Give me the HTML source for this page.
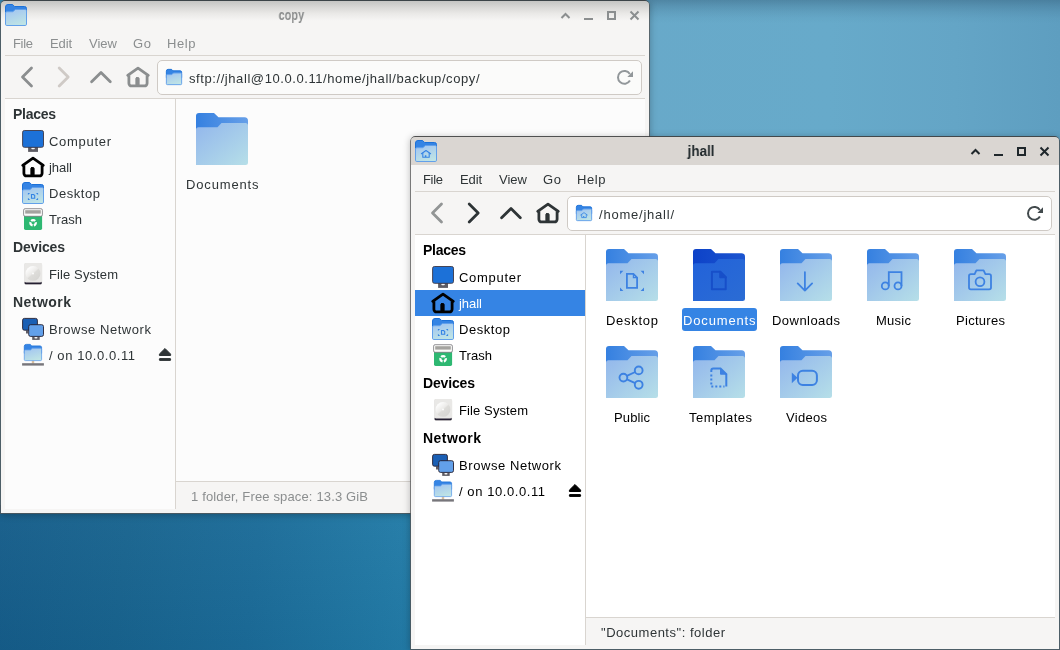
<!DOCTYPE html>
<html><head><meta charset="utf-8"><title>Thunar</title>
<style>
html,body{margin:0;padding:0;}
body{width:1060px;height:650px;overflow:hidden;position:relative;font-family:"Liberation Sans",sans-serif;background:#3a84ad;}
.dtr{position:absolute;left:640px;top:0;width:420px;height:140px;background:linear-gradient(180deg,rgba(45,85,112,0.42) 0px,rgba(45,85,112,0.26) 6px,rgba(45,85,112,0.13) 12px,rgba(45,85,112,0.04) 18px,rgba(45,85,112,0) 24px),linear-gradient(90deg,#68a9c9 0%,#67aaca 45%,#64a5c6 75%,#5e9ec0 100%);}
.dbl{position:absolute;left:0;top:505px;width:420px;height:145px;background:linear-gradient(180deg,rgba(255,255,255,0.03) 0%,rgba(0,20,50,0.05) 100%),linear-gradient(97deg,#155d8a 0%,#18648f 30%,#1b6c99 60%,#217aa6 90%,#247eaa 100%);}
.win{position:absolute;width:650px;height:514px;box-sizing:border-box;border-radius:5px 5px 0 0;box-shadow:0 1px 7px rgba(0,0,0,0.26);overflow:hidden;}
.win::after{content:"";position:absolute;left:0;top:0;right:0;bottom:0;border-radius:5px 5px 0 0;border:1px solid rgba(85,85,85,0.78);border-top-color:rgba(62,62,62,0.9);pointer-events:none;box-sizing:border-box;}
.wbg{position:absolute;left:1px;top:1px;right:1px;bottom:1px;background:#f6f5f4;border-radius:4px 4px 0 0;}
.titlebar{position:absolute;left:1px;top:1px;width:648px;height:29px;border-radius:4px 4px 0 0;background:linear-gradient(180deg,#c6c6c4 0%,#cbcbc9 7%,#dcdbd9 25%,#ebeae8 45%,#f6f5f4 68%);}
.win.active .titlebar{background:#dad6d2;height:28px;}
.t{position:absolute;white-space:nowrap;line-height:20px;height:20px;will-change:transform;}
.ic{position:absolute;overflow:visible;}
.hsep{position:absolute;left:5px;width:640px;height:1px;background:#d9d5d0;}
.vsep{position:absolute;left:175px;top:99px;width:1px;height:410px;background:#d9d5d0;}
.entry{position:absolute;left:157px;top:60px;width:485px;height:35px;box-sizing:border-box;border:1px solid #cfcac5;border-radius:5px;background:#fbfbfa;}
.win.active .entry{background:#ffffff;}
.side{position:absolute;left:5px;top:99px;width:170px;height:410px;background:#fcfcfc;}
.win.active .side{background:#ffffff;}
.main{position:absolute;left:176px;top:99px;width:469px;height:382px;background:#fcfcfc;}
.win.active .main{background:#ffffff;}
.selrow{position:absolute;left:5px;width:170px;height:26px;background:#3584e4;}
.sellab{position:absolute;background:#3584e4;border-radius:3px;}

</style></head><body>
<svg width="0" height="0" style="position:absolute">
<defs>
<linearGradient id="gb" x1="0" y1="0" x2="1" y2="0"><stop offset="0" stop-color="#3580e0"/><stop offset="1" stop-color="#669fe8"/></linearGradient>
<linearGradient id="gf" x1="0" y1="0" x2="1" y2="1"><stop offset="0" stop-color="#92b6ec"/><stop offset="1" stop-color="#b6dfe8"/></linearGradient>
<linearGradient id="gbs" x1="0" y1="0" x2="1" y2="0"><stop offset="0" stop-color="#0d42c8"/><stop offset="1" stop-color="#1c55d0"/></linearGradient>
<linearGradient id="gfs" x1="0" y1="0" x2="1" y2="1"><stop offset="0" stop-color="#2262da"/><stop offset="1" stop-color="#2b6cd4"/></linearGradient>
<linearGradient id="gfS" x1="0.2" y1="0" x2="0.6" y2="1"><stop offset="0" stop-color="#a2c5f1"/><stop offset="1" stop-color="#bfe4e5"/></linearGradient>
<linearGradient id="gdisk" x1="0.15" y1="0.1" x2="0.85" y2="0.9"><stop offset="0" stop-color="#ffffff"/><stop offset="0.45" stop-color="#ecebe9"/><stop offset="0.55" stop-color="#dddcd9"/><stop offset="1" stop-color="#d6d5d2"/></linearGradient>
<g id="folderS">
<path d="M0.5 3 A2.5 2.5 0 0 1 3 0.5 H7.6 L9.6 2.5 H19.5 A2 2 0 0 1 21.5 4.5 V12 H0.5 Z" fill="#3584e4" stroke="#1c71d8"/>
<path d="M0.5 9 A1.3 1.3 0 0 1 1.8 7.7 H8 L10.2 5.5 H20.2 A1.3 1.3 0 0 1 21.5 6.8 V20.2 A1.3 1.3 0 0 1 20.2 21.5 H1.8 A1.3 1.3 0 0 1 0.5 20.2 Z" fill="url(#gfS)" stroke="#62a0ea"/>
</g>
<g id="emS-home" fill="none" stroke="#3584e4" stroke-width="1.1" stroke-linejoin="round" stroke-linecap="round">
<path d="M6.4 13.7 L11 10.5 L15.6 13.7"/><path d="M7.8 13.3 V17.3 H14.2 V13.3"/><path d="M10.6 17 V15.2" stroke-width="1.5" stroke-linecap="butt"/>
</g>
<g id="emS-desktop" fill="none" stroke="#3584e4" stroke-width="1.1">
<path d="M9.5 12.5 H11.6 L12.7 13.6 V16.3 H9.5 Z"/>
<path d="M5.9 10.9 H8.1 L5.9 13.1 Z M16.1 10.9 H13.9 L16.1 13.1 Z M5.9 17.9 H8.1 L5.9 15.7 Z M16.1 17.9 H13.9 L16.1 15.7 Z" fill="#3584e4" stroke="none"/>
</g>
<g id="folder">
<path d="M3 0 H18 L22.5 4.2 H48.5 A3.5 3.5 0 0 1 52 7.7 V30 H0 V3 A3 3 0 0 1 3 0 Z" fill="url(#gb)"/>
<path d="M2.5 14.2 H21.5 L25.5 10 H49.5 A2.5 2.5 0 0 1 52 12.5 V49.5 A2.5 2.5 0 0 1 49.5 52 H0 V16.7 A2.5 2.5 0 0 1 2.5 14.2 Z" fill="url(#gf)"/>
</g>
<g id="folder-sel">
<path d="M3 0 H18 L22.5 4.2 H48.5 A3.5 3.5 0 0 1 52 7.7 V30 H0 V3 A3 3 0 0 1 3 0 Z" fill="url(#gbs)"/>
<path d="M2.5 14.2 H21.5 L25.5 10 H49.5 A2.5 2.5 0 0 1 52 12.5 V49.5 A2.5 2.5 0 0 1 49.5 52 H0 V16.7 A2.5 2.5 0 0 1 2.5 14.2 Z" fill="url(#gfs)"/>
</g>
<g id="em-home-big" fill="none" stroke="#2f7ae0" stroke-width="2.7" stroke-linejoin="round" stroke-linecap="round">
<path d="M18 32.5 L26.5 25.2 L35 32.5"/><path d="M20.3 31.5 V40.3 H32.7 V31.5"/><path d="M26.5 40 V36.5" stroke-width="3"/>
</g>
<g id="em-desktop" fill="none" stroke="#3d82e2" stroke-width="1.8">
<path d="M20.9 24.9 H27.4 L31.1 28.6 V38.9 H20.9 Z"/><path d="M27.4 24.9 V28.6 H31.1" stroke-width="1.2"/>
<path d="M14 21.8 H17.4 L14 25.2 Z M38 21.8 H34.6 L38 25.2 Z M14 42 H17.4 L14 38.6 Z M38 42 H34.6 L38 38.6 Z" fill="#3d82e2" stroke="none"/>
</g>
<g id="em-documents" fill="none" stroke="#174fc9" stroke-width="2" stroke-linejoin="round">
<path d="M18.9 22.8 H27.2 L32.7 28.3 V40.3 H18.9 Z"/><path d="M27.2 22.8 V28.3 H32.7 Z" fill="#174fc9"/>
</g>
<g id="em-downloads" fill="none" stroke="#3d82e2" stroke-width="1.8" stroke-linecap="round" stroke-linejoin="round">
<path d="M24.9 23.1 V41.6 M17.7 34.4 L24.9 41.6 L32.1 34.4"/>
</g>
<g id="em-music" fill="none" stroke="#3d82e2" stroke-width="1.8">
<circle cx="18.3" cy="36.9" r="3.5"/><circle cx="31" cy="36.9" r="3.5"/>
<path d="M21.8 36.9 V23.1 H34.5 V36.9"/>
</g>
<g id="em-pictures" fill="none" stroke="#3d82e2" stroke-width="1.8" stroke-linejoin="round">
<path d="M15 27 A1.9 1.9 0 0 1 16.9 25.1 H20.6 L22.4 21.3 H29.6 L31.4 25.1 H35.1 A1.9 1.9 0 0 1 37 27 V38.5 A1.9 1.9 0 0 1 35.1 40.4 H16.9 A1.9 1.9 0 0 1 15 38.5 Z"/>
<circle cx="26" cy="32.7" r="4.4"/>
</g>
<g id="em-public" fill="none" stroke="#3d82e2" stroke-width="1.9">
<circle cx="17.4" cy="31.6" r="3.9"/><circle cx="32.7" cy="24.4" r="3.9"/><circle cx="32.7" cy="38.8" r="3.9"/>
<path d="M20.9 29.9 L29.2 26 M20.9 33.3 L29.2 37.2"/>
</g>
<g id="em-templates" fill="none" stroke="#3d82e2" stroke-width="2">
<path d="M18.3 26 V24.4 A2 2 0 0 1 20.3 22.4 H27.5 L33.3 28.2 V40.4" />
<path d="M27.5 22.4 V28.2 H33.3 Z" fill="#3d82e2" stroke-width="1"/>
<path d="M18.3 28.4 V40.4 H31.5" stroke-dasharray="2 2"/>
</g>
<g id="em-videos" fill="none" stroke="#3d82e2" stroke-width="2">
<rect x="18" y="24.7" width="18.9" height="14.3" rx="4.8"/>
<path d="M11.8 26.4 L17.5 31.85 L11.8 37.3 Z" fill="#3d82e2" stroke="none"/>
</g>

<!-- sidebar icons 24x24 -->
<g id="si-computer">
<rect x="7.1" y="18" width="9.9" height="4.9" fill="#5e5c64"/><rect x="10.3" y="18.6" width="3.5" height="1.6" rx="0.8" fill="#f6f5f4"/>
<rect x="1.6" y="1.5" width="20.9" height="16.8" rx="1.8" fill="#1c71d8" stroke="#3d3846" stroke-width="0.9"/>
</g>
<g id="si-home" fill="none" stroke="currentColor" stroke-width="2.8" stroke-linejoin="round" stroke-linecap="round">
<path d="M1.7 10.3 L12 3.1 L22.3 10.3"/><path d="M2.9 10.2 V18.3 A2.6 2.6 0 0 0 5.5 20.9 H18.5 A2.6 2.6 0 0 0 21.1 18.3 V10.2" stroke-linecap="butt"/><rect x="9.9" y="12.6" width="3.2" height="8" rx="0.8" fill="currentColor" stroke-width="1"/>
</g>
<g id="si-desktop">
<g transform="translate(1,1)"><use href="#folderS"/><use href="#emS-desktop"/></g>
</g>
<g id="si-trash">
<path d="M3 9 H21.1 V21.3 A1.6 1.6 0 0 1 19.5 22.9 H4.6 A1.6 1.6 0 0 1 3 21.3 Z" fill="#2eb872"/>
<rect x="2.6" y="1.7" width="18.8" height="7.6" rx="1.5" fill="#fbfbfa" stroke="#77767b" stroke-width="0.8"/>
<rect x="4.2" y="3.2" width="15.6" height="3.4" fill="#a4a3a0"/>
<circle cx="12.1" cy="15.8" r="2.7" fill="none" stroke="#fff" stroke-width="2.2" stroke-dasharray="4.35 1.3" stroke-dashoffset="1"/>
</g>
<g id="si-disk">
<rect x="3.2" y="0.9" width="17.9" height="21.9" rx="2" fill="#dad9d6"/>
<rect x="3.6" y="19.6" width="17.1" height="2.7" rx="1" fill="#241f31"/>
<rect x="3.2" y="0.9" width="17.9" height="19.6" rx="1.9" fill="#e9e8e6"/>
<circle cx="12" cy="11.4" r="7.4" fill="url(#gdisk)"/>
<circle cx="12" cy="11.4" r="1" fill="#fbfbfb"/>
</g>
<g id="si-network">
<rect x="5" y="13.5" width="2.2" height="3" fill="#5e5c64"/>
<rect x="1.6" y="1.4" width="14.8" height="11.8" rx="1.8" fill="#1a5fb4" stroke="#241f31" stroke-width="0.9"/>
<rect x="11.2" y="19.6" width="7.5" height="3.3" fill="#5e5c64"/><rect x="13.4" y="20.1" width="3.1" height="1.4" rx="0.7" fill="#f6f5f4"/>
<rect x="7.7" y="7.7" width="14.8" height="11.7" rx="1.8" fill="#62a0ea" stroke="#241f31" stroke-width="0.9"/>
</g>
<g id="si-remote">
<rect x="10.8" y="17.5" width="2.4" height="3.2" fill="#dcc0a0"/>
<rect x="1.1" y="20.2" width="21.8" height="2.4" fill="#77767b"/>
<g transform="translate(2.9,1) scale(0.8227,0.7727)"><use href="#folderS"/></g>
</g>
</defs></svg>

<div class="dtr"></div><div class="dbl"></div>
<div class="win" style="left:0px;top:0px">
<div class="wbg"></div><div class="titlebar"></div>
<svg class="ic" style="left:5px;top:4px" width="22" height="22" viewBox="0 0 22 22"><use href="#folderS"/></svg>
<span class="t" style="left:274.86px;top:5.20px;font-size:14px;font-weight:bold;color:#8a8c8c;transform:scaleX(0.7804);transform-origin:50% 50%;">copy</span>
<svg class="ic" style="left:555px;top:5px" width="90" height="20" viewBox="0 0 90 20" fill="none" stroke="#8b8e8f" stroke-width="2"><path d="M6.5 13 L10.5 9 L14.5 13"/><path d="M29 14 H38"/><rect x="53" y="7" width="7" height="7"/><path d="M75.5 6.5 L83.5 14.5 M83.5 6.5 L75.5 14.5"/></svg>
<span class="t" style="left:13.00px;top:33.60px;font-size:13px;letter-spacing:-0.316px;color:#8b8e8f;">File</span>
<span class="t" style="left:50.00px;top:33.60px;font-size:13px;letter-spacing:-0.134px;color:#8b8e8f;">Edit</span>
<span class="t" style="left:89.00px;top:33.60px;font-size:13px;letter-spacing:0.019px;color:#8b8e8f;">View</span>
<span class="t" style="left:133.00px;top:33.60px;font-size:13px;letter-spacing:0.658px;color:#8b8e8f;">Go</span>
<span class="t" style="left:167.00px;top:33.60px;font-size:13px;letter-spacing:0.588px;color:#8b8e8f;">Help</span>
<div class="hsep" style="top:55px"></div>
<div class="hsep" style="top:98px"></div>
<svg class="ic" style="left:14px;top:62px" width="140" height="32" viewBox="0 0 140 32" fill="none" stroke-width="2.8" stroke-linecap="round" stroke-linejoin="round"><path d="M17.5 6 L8.5 15 L17.5 24" stroke="#8b8e8f"/><path d="M45.2 6 L54.2 15 L45.2 24" stroke="#cfcac6"/><path d="M77.6 19.8 L87 10.5 L96.3 19.8" stroke="#8b8e8f"/></svg>
<svg class="ic" style="left:126px;top:65px;color:#8b8e8f" width="24" height="24" viewBox="0 0 24 24"><use href="#si-home"/></svg>
<div class="entry"></div>
<svg class="ic" style="left:166px;top:69px" width="16" height="16" viewBox="0 0 22 22" stroke-width="1.3"><use href="#folderS"/></svg>
<span class="t" style="left:188.50px;top:68.60px;font-size:13px;letter-spacing:0.579px;color:#2e3436;">sftp://jhall@10.0.0.11/home/jhall/backup/copy/</span>
<svg class="ic" style="left:616px;top:69px" width="18" height="18" viewBox="0 0 18 18" fill="none" stroke="#92979a" stroke-width="2"><path d="M13.83 5.0 A6.4 6.4 0 1 0 13.94 11.6"/><path d="M11.3 8 H17 V2.2 Z" fill="#92979a" stroke="none"/></svg>
<div class="side"></div>
<div class="vsep"></div>
<div class="main"></div>
<div class="hsep" style="top:481px;left:176px;width:469px"></div>
<span class="t" style="left:13.00px;top:104.00px;font-size:14px;letter-spacing:-0.274px;color:#2e3436;font-weight:bold;">Places</span>
<span class="t" style="left:13.00px;top:237.00px;font-size:14px;letter-spacing:-0.155px;color:#2e3436;font-weight:bold;">Devices</span>
<span class="t" style="left:13.00px;top:292.00px;font-size:14px;letter-spacing:0.461px;color:#2e3436;font-weight:bold;">Network</span>
<span class="t" style="left:49.00px;top:131.60px;font-size:13px;letter-spacing:0.703px;color:#2e3436;">Computer</span>
<svg class="ic" style="left:21px;top:129px;color:#000" width="24" height="24" viewBox="0 0 24 24"><use href="#si-computer"/></svg>
<span class="t" style="left:49.00px;top:157.60px;font-size:13px;letter-spacing:-0.031px;color:#2e3436;">jhall</span>
<svg class="ic" style="left:21px;top:155px;color:#000" width="24" height="24" viewBox="0 0 24 24"><use href="#si-home"/></svg>
<span class="t" style="left:49.00px;top:183.60px;font-size:13px;letter-spacing:0.552px;color:#2e3436;">Desktop</span>
<svg class="ic" style="left:21px;top:181px;color:#000" width="24" height="24" viewBox="0 0 24 24"><use href="#si-desktop"/></svg>
<span class="t" style="left:49.00px;top:209.60px;font-size:13px;letter-spacing:0.063px;color:#2e3436;">Trash</span>
<svg class="ic" style="left:21px;top:207px;color:#000" width="24" height="24" viewBox="0 0 24 24"><use href="#si-trash"/></svg>
<span class="t" style="left:49.00px;top:264.60px;font-size:13px;letter-spacing:0.110px;color:#2e3436;">File System</span>
<svg class="ic" style="left:21px;top:262px;color:#000" width="24" height="24" viewBox="0 0 24 24"><use href="#si-disk"/></svg>
<span class="t" style="left:49.00px;top:319.60px;font-size:13px;letter-spacing:0.566px;color:#2e3436;">Browse Network</span>
<svg class="ic" style="left:21px;top:317px;color:#000" width="24" height="24" viewBox="0 0 24 24"><use href="#si-network"/></svg>
<span class="t" style="left:49.00px;top:345.60px;font-size:13px;letter-spacing:0.573px;color:#2e3436;">/ on 10.0.0.11</span>
<svg class="ic" style="left:21px;top:343px;color:#000" width="24" height="24" viewBox="0 0 24 24"><use href="#si-remote"/></svg>
<svg class="ic" style="left:157px;top:347px" width="16" height="16" viewBox="0 0 16 16" fill="#2e3436" stroke="#2e3436" stroke-width="1" stroke-linejoin="round"><path d="M8 1.5 L13.6 7.1 V8.5 H2.4 V7.1 Z"/><rect x="2.4" y="11.6" width="11.2" height="1.8" rx="0.4"/></svg>
<svg class="ic f" style="left:196px;top:113px" width="52" height="52" viewBox="0 0 52 52"><use href="#folder"/></svg>
<span class="t" style="left:186.25px;top:174.60px;font-size:13px;letter-spacing:0.844px;color:#2e3436;">Documents</span>
<span class="t" style="left:191.00px;top:486.60px;font-size:13px;letter-spacing:0.148px;color:#8b8e8f;">1 folder, Free space: 13.3 GiB</span>
</div>
<div class="win active" style="left:410px;top:136px">
<div class="wbg"></div><div class="titlebar"></div>
<svg class="ic" style="left:5px;top:4px" width="22" height="22" viewBox="0 0 22 22"><use href="#folderS"/><use href="#emS-home"/></svg>
<span class="t" style="left:277.20px;top:5.20px;font-size:14px;font-weight:bold;color:#1e2629;transform:scaleX(0.9641);transform-origin:50% 50%;">jhall</span>
<svg class="ic" style="left:555px;top:5px" width="90" height="20" viewBox="0 0 90 20" fill="none" stroke="#1f272b" stroke-width="2"><path d="M6.5 13 L10.5 9 L14.5 13"/><path d="M29 14 H38"/><rect x="53" y="7" width="7" height="7"/><path d="M75.5 6.5 L83.5 14.5 M83.5 6.5 L75.5 14.5"/></svg>
<span class="t" style="left:13.00px;top:33.60px;font-size:13px;letter-spacing:-0.316px;color:#2e3436;">File</span>
<span class="t" style="left:50.00px;top:33.60px;font-size:13px;letter-spacing:-0.134px;color:#2e3436;">Edit</span>
<span class="t" style="left:89.00px;top:33.60px;font-size:13px;letter-spacing:0.019px;color:#2e3436;">View</span>
<span class="t" style="left:133.00px;top:33.60px;font-size:13px;letter-spacing:0.658px;color:#2e3436;">Go</span>
<span class="t" style="left:167.00px;top:33.60px;font-size:13px;letter-spacing:0.588px;color:#2e3436;">Help</span>
<div class="hsep" style="top:55px"></div>
<div class="hsep" style="top:98px"></div>
<svg class="ic" style="left:14px;top:62px" width="140" height="32" viewBox="0 0 140 32" fill="none" stroke-width="2.8" stroke-linecap="round" stroke-linejoin="round"><path d="M17.5 6 L8.5 15 L17.5 24" stroke="#929595"/><path d="M45.2 6 L54.2 15 L45.2 24" stroke="#2e3436"/><path d="M77.6 19.8 L87 10.5 L96.3 19.8" stroke="#2e3436"/></svg>
<svg class="ic" style="left:126px;top:65px;color:#2e3436" width="24" height="24" viewBox="0 0 24 24"><use href="#si-home"/></svg>
<div class="entry"></div>
<svg class="ic" style="left:166px;top:69px" width="16" height="16" viewBox="0 0 22 22" stroke-width="1.3"><use href="#folderS"/><use href="#emS-home"/></svg>
<span class="t" style="left:188.50px;top:68.60px;font-size:13px;letter-spacing:0.775px;color:#2e3436;">/home/jhall/</span>
<svg class="ic" style="left:616px;top:69px" width="18" height="18" viewBox="0 0 18 18" fill="none" stroke="#41494c" stroke-width="2"><path d="M13.83 5.0 A6.4 6.4 0 1 0 13.94 11.6"/><path d="M11.3 8 H17 V2.2 Z" fill="#41494c" stroke="none"/></svg>
<div class="side"></div>
<div class="vsep"></div>
<div class="main"></div>
<div class="hsep" style="top:481px;left:176px;width:469px"></div>
<div class="selrow" style="top:154px"></div>
<span class="t" style="left:13.00px;top:104.00px;font-size:14px;letter-spacing:-0.274px;color:#000000;font-weight:bold;">Places</span>
<span class="t" style="left:13.00px;top:237.00px;font-size:14px;letter-spacing:-0.155px;color:#000000;font-weight:bold;">Devices</span>
<span class="t" style="left:13.00px;top:292.00px;font-size:14px;letter-spacing:0.461px;color:#000000;font-weight:bold;">Network</span>
<span class="t" style="left:49.00px;top:131.60px;font-size:13px;letter-spacing:0.703px;color:#000000;">Computer</span>
<svg class="ic" style="left:21px;top:129px;color:#000" width="24" height="24" viewBox="0 0 24 24"><use href="#si-computer"/></svg>
<span class="t" style="left:49.00px;top:157.60px;font-size:13px;letter-spacing:-0.031px;color:#ffffff;">jhall</span>
<svg class="ic" style="left:21px;top:155px;color:#000" width="24" height="24" viewBox="0 0 24 24"><use href="#si-home"/></svg>
<span class="t" style="left:49.00px;top:183.60px;font-size:13px;letter-spacing:0.552px;color:#000000;">Desktop</span>
<svg class="ic" style="left:21px;top:181px;color:#000" width="24" height="24" viewBox="0 0 24 24"><use href="#si-desktop"/></svg>
<span class="t" style="left:49.00px;top:209.60px;font-size:13px;letter-spacing:0.063px;color:#000000;">Trash</span>
<svg class="ic" style="left:21px;top:207px;color:#000" width="24" height="24" viewBox="0 0 24 24"><use href="#si-trash"/></svg>
<span class="t" style="left:49.00px;top:264.60px;font-size:13px;letter-spacing:0.110px;color:#000000;">File System</span>
<svg class="ic" style="left:21px;top:262px;color:#000" width="24" height="24" viewBox="0 0 24 24"><use href="#si-disk"/></svg>
<span class="t" style="left:49.00px;top:319.60px;font-size:13px;letter-spacing:0.566px;color:#000000;">Browse Network</span>
<svg class="ic" style="left:21px;top:317px;color:#000" width="24" height="24" viewBox="0 0 24 24"><use href="#si-network"/></svg>
<span class="t" style="left:49.00px;top:345.60px;font-size:13px;letter-spacing:0.573px;color:#000000;">/ on 10.0.0.11</span>
<svg class="ic" style="left:21px;top:343px;color:#000" width="24" height="24" viewBox="0 0 24 24"><use href="#si-remote"/></svg>
<svg class="ic" style="left:157px;top:347px" width="16" height="16" viewBox="0 0 16 16" fill="#000" stroke="#000" stroke-width="1" stroke-linejoin="round"><path d="M8 1.5 L13.6 7.1 V8.5 H2.4 V7.1 Z"/><rect x="2.4" y="11.6" width="11.2" height="1.8" rx="0.4"/></svg>
<svg class="ic f" style="left:196px;top:113px" width="52" height="52" viewBox="0 0 52 52"><use href="#folder"/><use href="#em-desktop"/></svg>
<span class="t" style="left:195.50px;top:174.60px;font-size:13px;letter-spacing:0.718px;color:#000000;">Desktop</span>
<svg class="ic fsel" style="left:283px;top:113px" width="52" height="52" viewBox="0 0 52 52"><use href="#folder-sel"/><use href="#em-documents"/></svg>
<div class="sellab" style="left:271.5px;top:172px;width:75px;height:23px"></div>
<span class="t" style="left:273.25px;top:174.60px;font-size:13px;letter-spacing:0.844px;color:#ffffff;">Documents</span>
<svg class="ic f" style="left:370px;top:113px" width="52" height="52" viewBox="0 0 52 52"><use href="#folder"/><use href="#em-downloads"/></svg>
<span class="t" style="left:362.00px;top:174.60px;font-size:13px;letter-spacing:0.461px;color:#000000;">Downloads</span>
<svg class="ic f" style="left:457px;top:113px" width="52" height="52" viewBox="0 0 52 52"><use href="#folder"/><use href="#em-music"/></svg>
<span class="t" style="left:465.50px;top:174.60px;font-size:13px;letter-spacing:0.263px;color:#000000;">Music</span>
<svg class="ic f" style="left:544px;top:113px" width="52" height="52" viewBox="0 0 52 52"><use href="#folder"/><use href="#em-pictures"/></svg>
<span class="t" style="left:545.50px;top:174.60px;font-size:13px;letter-spacing:0.291px;color:#000000;">Pictures</span>
<svg class="ic f" style="left:196px;top:210px" width="52" height="52" viewBox="0 0 52 52"><use href="#folder"/><use href="#em-public"/></svg>
<span class="t" style="left:204.00px;top:271.60px;font-size:13px;letter-spacing:0.118px;color:#000000;">Public</span>
<svg class="ic f" style="left:283px;top:210px" width="52" height="52" viewBox="0 0 52 52"><use href="#folder"/><use href="#em-templates"/></svg>
<span class="t" style="left:278.50px;top:271.60px;font-size:13px;letter-spacing:0.469px;color:#000000;">Templates</span>
<svg class="ic f" style="left:370px;top:210px" width="52" height="52" viewBox="0 0 52 52"><use href="#folder"/><use href="#em-videos"/></svg>
<span class="t" style="left:375.50px;top:271.60px;font-size:13px;letter-spacing:0.297px;color:#000000;">Videos</span>
<span class="t" style="left:191.00px;top:486.60px;font-size:13px;letter-spacing:0.515px;color:#2e3436;">&quot;Documents&quot;: folder</span>
</div>
</body></html>
